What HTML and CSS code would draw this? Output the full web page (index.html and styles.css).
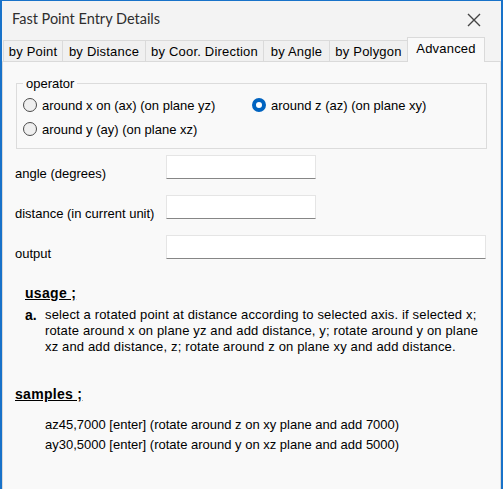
FILE: index.html
```html
<!DOCTYPE html>
<html>
<head>
<meta charset="utf-8">
<link rel="stylesheet" href="styles.css">
</head>
<body>
<div class="window">
  <div class="titlebar">
    <span class="title">Fast Point Entry Details</span>
    <svg class="close" width="14" height="14" viewBox="0 0 14 14"><path d="M1 1 L13 13 M13 1 L1 13" stroke="#444" stroke-width="1.4" fill="none"/></svg>
  </div>
  <div class="tabs">
    <div class="tab t-point">by Point</div>
    <div class="tab t-distance">by Distance</div>
    <div class="tab t-coor">by Coor. Direction</div>
    <div class="tab t-angle">by Angle</div>
    <div class="tab t-polygon">by Polygon</div>
    <div class="tab t-advanced active">Advanced</div>
  </div>
  <div class="panel">
    <fieldset class="group">
      <legend>operator</legend>
      <div class="radios">
        <label class="radio"><span class="dot"></span>around x on (ax) (on plane yz)</label>
        <label class="radio"><span class="dot checked"></span>around z (az) (on plane xy)</label>
        <label class="radio"><span class="dot"></span>around y (ay) (on plane xz)</label>
      </div>
    </fieldset>
    <div class="form">
      <span class="lbl">angle (degrees)</span><span class="input short"></span>
      <span class="lbl">distance (in current unit)</span><span class="input short"></span>
      <span class="lbl">output</span><span class="input long"></span>
    </div>
    <div class="usage">
      <div class="heading">usage ;</div>
      <div class="item">
        <span class="bullet">a.</span>
        <p class="text">select a rotated point at distance according to selected axis. if selected x; rotate around x on plane yz and add distance, y; rotate around y on plane xz and add distance, z; rotate around z on plane xy and add distance.</p>
      </div>
    </div>
    <div class="samples">
      <div class="heading">samples ;</div>
      <div class="lines">
        <div>az45,7000 [enter] (rotate around z on xy plane and add 7000)</div>
        <div>ay30,5000 [enter] (rotate around y on xz plane and add 5000)</div>
      </div>
    </div>
  </div>
</div>
</body>
</html>
```
FILE: styles.css
```css
html, body {
  margin: 0;
  padding: 0;
  background: #f9f9f9;
}
.window {
  width: 503px;
  height: 489px;
  box-sizing: border-box;
  border-left: 2px solid #1872c9;
  border-right: 2px solid #1872c9;
  border-top: 1px solid #1872c9;
  background: #f3f3f3;
  display: flex;
  flex-direction: column;
  overflow: hidden;
  font-family: "Liberation Sans", Arial, sans-serif;
  font-size: 13px;
  color: #000;
}
.titlebar {
  height: 37px;
  flex: none;
  display: flex;
  align-items: center;
  justify-content: space-between;
  padding: 0 20px 0 10px;
}
.title {
  font-family: Lato, "Open Sans", sans-serif;
  font-size: 14.5px;
  color: #2e2e2e;
  margin-top: -2px;
}
.close {
  display: block;
}
.tabs {
  flex: none;
  height: 23px;
  display: flex;
  align-items: flex-end;
  padding-left: 1px;
  position: relative;
  z-index: 1;
}
.tab {
  height: 21px;
  line-height: 21px;
  box-sizing: border-box;
  border: 1px solid #dadada;
  border-bottom: none;
  background: #f0f0f0;
  margin-right: -1px;
  white-space: nowrap;
  text-align: center;
  letter-spacing: 0.2px;
}
.t-point { width: 60px; }
.t-distance { width: 84px; }
.t-coor { width: 119px; }
.t-angle { width: 67px; }
.t-polygon { width: 79px; }
.t-advanced { width: 78px; }
.tab.active {
  height: 25px;
  line-height: 21px;
  margin-bottom: -1px;
  background: #f9f9f9;
}
.panel {
  flex: 1;
  background: #f9f9f9;
  border: 1px solid #dadada;
  border-bottom: none;
}
.group {
  margin: 14px 13px 0 13px;
  padding: 0 0 7px 6px;
  border: 1px solid #dcdcdc;
}
.group legend {
  padding: 0 3px;
  line-height: 15px;
}
.radios {
  display: grid;
  grid-template-columns: 229px 1fr;
  grid-auto-rows: 24px;
  margin-top: 2px;
}
.radio {
  display: flex;
  align-items: center;
  gap: 5px;
  white-space: nowrap;
}
.dot {
  width: 14px;
  height: 14px;
  box-sizing: border-box;
  border-radius: 50%;
  border: 1px solid #4a4a4a;
  background: #efefef;
  flex: none;
}
.dot.checked {
  border: 4.5px solid #0063c0;
  background: #fff;
}
.form {
  display: grid;
  grid-template-columns: 151px auto;
  grid-auto-rows: 24px;
  row-gap: 16px;
  margin: 6px 0 0 12px;
  align-items: start;
}
.lbl {
  white-space: nowrap;
  line-height: 15px;
  margin-top: 11px;
}
.input {
  height: 24px;
  box-sizing: border-box;
  background: #fff;
  border: 1px solid #e5e5e5;
  border-bottom: 1px solid #868686;
}
.input.short { width: 150px; }
.input.long { width: 320px; }
.heading {
  font-weight: bold;
  font-size: 14px;
  letter-spacing: 0.3px;
  text-decoration: underline;
  line-height: 16px;
}
.usage {
  margin: 26px 0 0 22px;
}
.item {
  display: grid;
  grid-template-columns: 20px 1fr;
  margin-top: 6px;
}
.bullet {
  font-weight: bold;
  font-size: 14px;
  line-height: 16px;
}
.text {
  margin: 0;
  line-height: 16px;
  letter-spacing: 0.15px;
  width: 436px;
}
.samples {
  margin: 31px 0 0 12px;
}
.lines {
  margin: 13px 0 0 30px;
  line-height: 20px;
}
```
